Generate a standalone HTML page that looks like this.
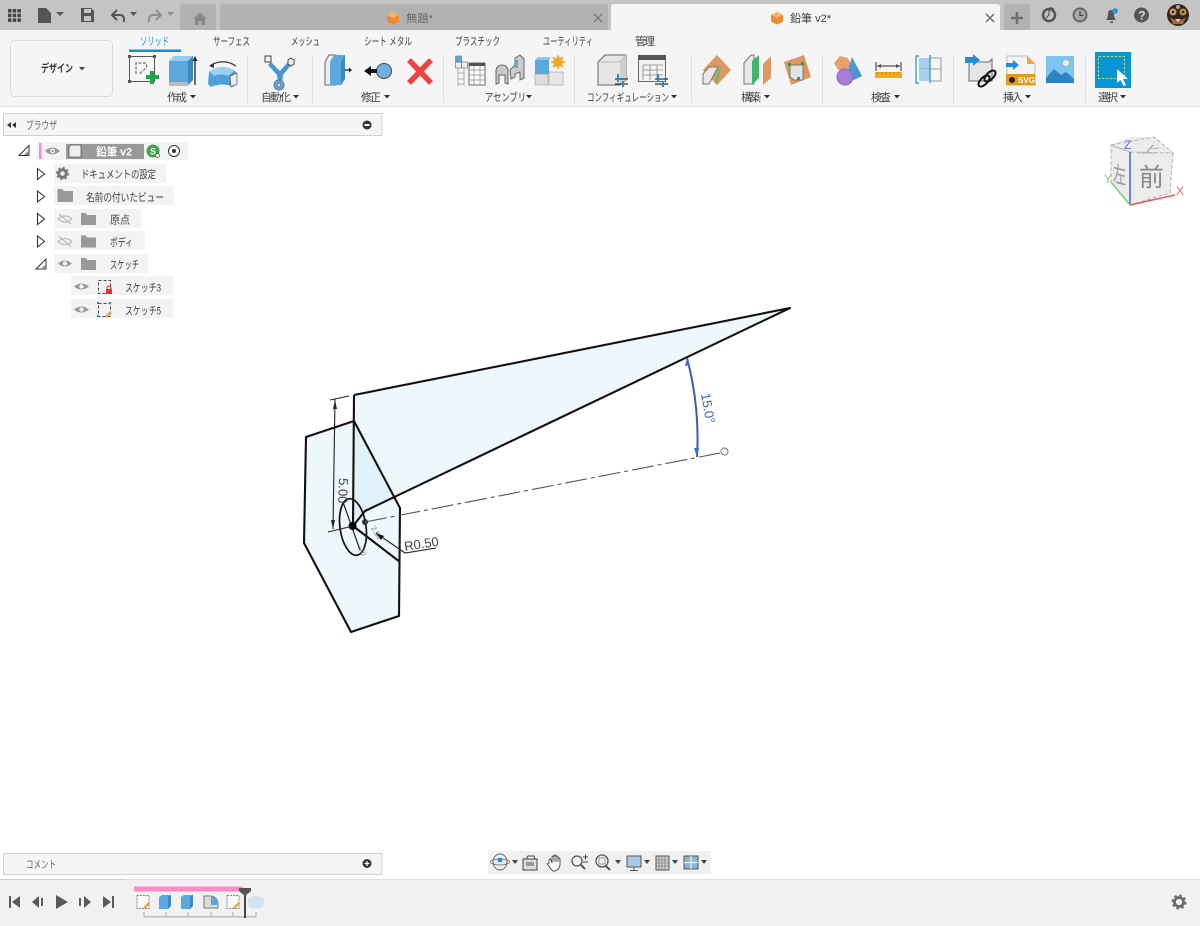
<!DOCTYPE html>
<html><head><meta charset="utf-8"><style>
html,body{margin:0;padding:0;background:#fff;width:1200px;height:926px;overflow:hidden}
svg{display:block}
text{font-family:"Liberation Sans","Noto Sans CJK JP",sans-serif;font-size:11px;fill:#3e3e3e}
</style></head><body>
<svg width="1200" height="926" viewBox="0 0 1200 926" xmlns="http://www.w3.org/2000/svg">
<rect width="1200" height="926" fill="#fff"/>
<!-- top bar -->
<rect width="1200" height="30" fill="#c4c4c4"/>
<path d="M180 30V7q0-3 3-3h30q3 0 3 3v23z" fill="#b2b2b2"/>
<path d="M220 30V7q0-3 3-3h382q3 0 3 3v23z" fill="#b2b2b2"/>
<path d="M611 30V7q0-3 3-3h383q3 0 3 3v23z" fill="#f5f5f5"/>
<path d="M1004 30V7q0-3 3-3h20q3 0 3 3v23z" fill="#b2b2b2"/>
<g fill="#444"><rect x="8" y="9" width="3.5" height="3.5"/><rect x="12.7" y="9" width="3.5" height="3.5"/><rect x="17.4" y="9" width="3.5" height="3.5"/><rect x="8" y="13.7" width="3.5" height="3.5"/><rect x="12.7" y="13.7" width="3.5" height="3.5"/><rect x="17.4" y="13.7" width="3.5" height="3.5"/><rect x="8" y="18.4" width="3.5" height="3.5"/><rect x="12.7" y="18.4" width="3.5" height="3.5"/><rect x="17.4" y="18.4" width="3.5" height="3.5"/></g>
<path d="M38 8h8l5 5v10H38z" fill="#555"/><path d="M56 12h8l-4 4z" fill="#555"/>
<path d="M81 8h10l3 3v11H81z" fill="#555"/><rect x="84" y="9" width="7" height="4" fill="#c4c4c4"/><rect x="84" y="16" width="7" height="5" fill="#c4c4c4"/>
<path d="M117 10l-5 5 5 5" fill="none" stroke="#555" stroke-width="2"/><path d="M113 15h7q4 0 4 5v2" fill="none" stroke="#555" stroke-width="2"/><path d="M130 12h7l-3.500 4z" fill="#555"/>
<path d="M156 10l5 5-5 5" fill="none" stroke="#8f8f8f" stroke-width="2"/><path d="M160 15h-7q-4 0-4 5v2" fill="none" stroke="#8f8f8f" stroke-width="2"/><path d="M167 12h7l-3.500 4z" fill="#8f8f8f"/>
<path d="M193 19l7-6.500 7 6.500h-2v6h-3.500v-4h-3v4H195v-6z" fill="#8a8a8a"/>
<path d="M393 12l6 3v6.500l-6 3-6-3V15z" fill="#f08a2c"/><path d="M393 12l6 3-6 3-6-3z" fill="#f9b26b"/>
<text x="406" y="22" textLength="27" lengthAdjust="spacingAndGlyphs" style="fill:#666">無題*</text>
<path d="M594 14l8 8M602 14l-8 8" stroke="#777" stroke-width="1.300"/>
<path d="M777 12l6 3v6.500l-6 3-6-3V15z" fill="#f08a2c"/><path d="M777 12l6 3-6 3-6-3z" fill="#f9b26b"/>
<text x="790" y="22" textLength="41" lengthAdjust="spacingAndGlyphs">鉛筆 v2*</text>
<path d="M986 14l8 8M994 14l-8 8" stroke="#666" stroke-width="1.300"/>
<path d="M1017 12v12M1011 18h12" stroke="#6f6f6f" stroke-width="2.600"/>
<circle cx="1049" cy="15" r="6" fill="none" stroke="#555" stroke-width="2.500"/><path d="M1049 7l5 1-1 5z" fill="#555"/><path d="M1049 10v5l-3 3" stroke="#555" stroke-width="1.200" fill="none"/>
<circle cx="1080" cy="15" r="7.500" fill="#666"/><circle cx="1080" cy="15" r="5.500" fill="#aaa"/><path d="M1080 11v4.500h3.500" stroke="#444" stroke-width="1.300" fill="none"/>
<path d="M1106 20q2-2 2-6 0-4 3-4t3 4q0 4 2 6zM1110 21.500h3v1.500h-3z" fill="#555"/><circle cx="1115" cy="11" r="2.800" fill="#2196e0"/>
<circle cx="1141.500" cy="15" r="7.500" fill="#555"/><text x="1138.200" y="19.500" style="font-size:12px;font-weight:bold;fill:#ddd">?</text>
<circle cx="1178" cy="15" r="11" fill="#33261b"/><circle cx="1173" cy="12" r="3.500" fill="#c99a60"/><circle cx="1183" cy="12" r="3.500" fill="#b98a50"/><circle cx="1173" cy="12" r="1.200" fill="#222"/><circle cx="1183" cy="12" r="1.200" fill="#222"/><path d="M1170 17q8 7 16 0l-3 7h-10z" fill="#a9683a"/><path d="M1175 19h6l-3 3z" fill="#e6d2b0"/><circle cx="1178" cy="7" r="2" fill="#caa070"/>
<!-- toolbar -->
<rect y="30" width="1200" height="76" fill="#f5f5f5"/>
<rect y="106" width="1200" height="1" fill="#e2e2e2"/>
<rect x="10.500" y="40.500" width="102" height="56" rx="4" fill="#f5f5f5" stroke="#dcdcdc"/>
<text x="41" y="72" textLength="32" lengthAdjust="spacingAndGlyphs" style="font-weight:bold;fill:#333">デザイン</text><path d="M79 67h6l-3 3.500z" fill="#444"/>
<text x="140" y="45" textLength="29" lengthAdjust="spacingAndGlyphs" style="fill:#1b95d5">ソリッド</text>
<rect x="129" y="49.500" width="52" height="2.500" fill="#1091d4"/>
<text x="213" y="45" textLength="37" lengthAdjust="spacingAndGlyphs">サーフェス</text>
<text x="291" y="45" textLength="29" lengthAdjust="spacingAndGlyphs">メッシュ</text>
<text x="364" y="45" textLength="48" lengthAdjust="spacingAndGlyphs">シート メタル</text>
<text x="455" y="45" textLength="45" lengthAdjust="spacingAndGlyphs">プラスチック</text>
<text x="543" y="45" textLength="50" lengthAdjust="spacingAndGlyphs">ユーティリティ</text>
<text x="635" y="45" textLength="20">管理</text>
<g fill="#dedede"><rect x="247" y="55" width="1" height="48"/><rect x="312" y="55" width="1" height="48"/><rect x="443" y="55" width="1" height="48"/><rect x="574" y="55" width="1" height="48"/><rect x="691" y="55" width="1" height="48"/><rect x="822" y="55" width="1" height="48"/><rect x="953" y="55" width="1" height="48"/><rect x="1085" y="55" width="1" height="48"/></g>
<text x="167" y="101" textLength="20">作成</text><path d="M190 95h6l-3 3.500z" fill="#333"/>
<text x="261" y="101" textLength="30">自動化</text><path d="M293 95h6l-3 3.500z" fill="#333"/>
<text x="361" y="101" textLength="20">修正</text><path d="M384 95h6l-3 3.500z" fill="#333"/>
<text x="485" y="101" textLength="41" lengthAdjust="spacingAndGlyphs">アセンブリ</text><path d="M526 95h6l-3 3.500z" fill="#333"/>
<text x="587" y="101" textLength="82" lengthAdjust="spacingAndGlyphs">コンフィギュレーション</text><path d="M671 95h6l-3 3.500z" fill="#333"/>
<text x="741" y="101" textLength="20">構築</text><path d="M764 95h6l-3 3.500z" fill="#333"/>
<text x="871" y="101" textLength="20">検査</text><path d="M894 95h6l-3 3.500z" fill="#333"/>
<text x="1003" y="101" textLength="20">挿入</text><path d="M1025 95h6l-3 3.500z" fill="#333"/>
<text x="1098" y="101" textLength="20">選択</text><path d="M1120 95h6l-3 3.500z" fill="#333"/>
<!-- sketch icon -->
<rect x="129.500" y="56.500" width="25" height="25" fill="none" stroke="#555"/><g fill="#555"><rect x="128" y="55" width="3" height="3"/><rect x="153" y="55" width="3" height="3"/><rect x="128" y="80" width="3" height="3"/></g><path d="M136 74V63h10q2 3-1 6-4 3-5 5" fill="none" stroke="#555" stroke-dasharray="3 1.500"/><path d="M149 74h4v-4h4v4h5v4h-5v5h-4v-5h-4z" transform="translate(-3 1)" fill="#1aa74a"/>
<!-- extrude -->
<path d="M169 61l5-5h19v24l-5 5h-19z" fill="#5aa8de"/><path d="M169 61l5-5h19l-5 5z" fill="#97cdf0"/><path d="M188 61l5-5v24l-5 5z" fill="#3f87bf"/><path d="M169 82h19v4h-19z" fill="#bcbcbc"/>
<path d="M195 85V59" stroke="#222" stroke-width="1.300"/><path d="M192.500 61l2.500-5 2.500 5z" fill="#222"/>
<!-- revolve -->
<path d="M209 72q14-9 26-1l2 2v11l-4 3q-10-5-22 0l-3-3z" fill="#4d9fd9"/><path d="M209 71q14-8 25 0l-6 5q-7-3-14 0z" fill="#9ad0f2"/><path d="M230 76l7-3v11l-6 3z" fill="#eee" stroke="#555" stroke-width=".7"/><path d="M211 65q13-7 25 1" fill="none" stroke="#333" stroke-width="1.200"/><path d="M209 66l5-3 0 5z" fill="#333"/>
<!-- automate -->
<path d="M271 62l9 9 8-9 3 3-8 10-1 9h-4l-1-9-9-10z" fill="#4a97cf"/><circle cx="279" cy="85" r="5" fill="#6aa7d4" stroke="#4a7fa8"/><circle cx="279" cy="85" r="2" fill="#ddd" stroke="#555" stroke-width=".7"/><rect x="265" y="56" width="6" height="6" fill="#eee" stroke="#444"/><path d="M291 58l3 2v4l-3 2-3-2v-4z" fill="#eee" stroke="#444"/>
<!-- press pull -->
<path d="M325 62l4-7h7v30h-11z" fill="#ededed" stroke="#666"/><path d="M330 62l4-7h11v24l-4 6h-11z" fill="#5aa8de"/><path d="M341 62l4-7v24l-4 6z" fill="#3f87bf"/><path d="M345 70h5" stroke="#222" stroke-width="1.300"/><path d="M349 67.500l3 2.500-3 2.500z" fill="#222"/>
<!-- fillet arrow -->
<circle cx="384" cy="71" r="7.500" fill="#75aee0" stroke="#444"/><path d="M364 71l7-5v3h6v4h-6v3z" fill="#111"/>
<path d="M409 60l22 23M431 60l-22 23" stroke="#f04141" stroke-width="5.500"/>
<!-- assembly -->
<rect x="455.500" y="56" width="6" height="6" fill="#5ba8de" stroke="#777" stroke-width=".6"/><rect x="461.500" y="62" width="6" height="6" fill="#eee" stroke="#666" stroke-width=".6"/><rect x="455.500" y="62" width="6" height="6" fill="#eee" stroke="#666" stroke-width=".6"/><path d="M458 68v18M464 68v18M458 73h6M458 79h6M458 84h6" stroke="#aaa"/><rect x="469" y="63" width="16" height="22" fill="#fff" stroke="#666"/><rect x="469" y="63" width="16" height="3" fill="#555"/><path d="M469 70h16M469 75h16M469 80h16M474 66v19M480 66v19" stroke="#888" stroke-width=".7"/>
<path d="M496 84V70q1-5 6-5t6 5v14l-3-1v-8h-6v8z" fill="#c8c8c8" stroke="#666"/><path d="M510 70l5-5v-7l5-3 4 4v19l-4 2v-8l-5 2v3l-4 2z" fill="#cdcdcd" stroke="#666"/><rect x="515" y="60" width="3" height="8" fill="#5ba8de"/>
<rect x="535" y="60" width="14" height="14" fill="#5aa8de"/><path d="M535 60l3-3h13l-2 3z" fill="#93c9ec"/><rect x="535" y="74" width="13" height="11" fill="#ddd" stroke="#999" stroke-width=".6"/><rect x="549" y="72" width="14" height="13" fill="#e7e7e7" stroke="#999" stroke-width=".6"/><path d="M558 54l1.500 4 4-1.500-1.500 4 4 1.500-4 1.500 1.500 4-4-1.500-1.500 4-1.500-4-4 1.500 1.500-4-4-1.500 4-1.500-1.500-4 4 1.500z" fill="#f5a623"/>
<!-- config -->
<path d="M598 62l7-7h21v25l-6 5h-22z" fill="#e6e6e6" stroke="#666"/><path d="M620 62l6-7v25l-6 5z" fill="#cfcfcf"/><path d="M598 62h22l6-7" fill="none" stroke="#bbb"/>
<path d="M615 79h13M615 84h13" stroke="#333" stroke-width="1.200"/><path d="M618 74v8M623 81v6" stroke="#1f8fd8" stroke-width="2"/>
<rect x="638.500" y="55.500" width="27" height="26" fill="#f3f3f3" stroke="#666"/><rect x="638" y="55" width="28" height="5" fill="#555"/><path d="M643 65h20M643 70h20M643 75h20M643 65v15M650 65v15M657 65v15" stroke="#888" stroke-width=".8"/>
<path d="M655 79h13M655 84h13" stroke="#333" stroke-width="1.200"/><path d="M658 74v8M663 81v6" stroke="#1f8fd8" stroke-width="2"/>
<!-- construct -->
<path d="M717 55l14 15-14 15-14-15z" fill="#e0965f"/><path d="M703 74l6-7h9l-9 17h-6z" fill="#e8e8e8" stroke="#777"/><path d="M718 70l4-5-4 16-3 3z" fill="#5cc07c"/>
<path d="M744 63l7-8h3v29h-10z" fill="#e8e8e8" stroke="#777"/><path d="M752 61l7-6v23l-7 7z" fill="#3fb56c"/>
<path d="M763 64l8-8v22l-8 7z" fill="#e0965f"/>
<path d="M784 62l20-7 7 22-20 8z" fill="#e0965f"/><path d="M790 65h13v15h-9l-4-3z" fill="#e3e3e3" stroke="#777"/><g fill="#19a84d"><rect x="788" y="63" width="3" height="3"/><rect x="801" y="62" width="3" height="3"/><rect x="797" y="77" width="3" height="3"/></g>
<!-- inspect -->
<path d="M840 56l8 2 3 6-5 7-8-1-4-7z" fill="#e8a06e"/><path d="M852 57l10 19-8 4-8-4z" fill="#4a97d3"/><circle cx="845" cy="77" r="8" fill="#a67fd8" stroke="#8b62c2"/>
<path d="M876 62v9M901 62v9M877 66h23" stroke="#555" stroke-width="1.200"/><path d="M877 66l4-2v4zM900 66l-4-2v4z" fill="#555"/><rect x="875" y="72" width="27" height="6" fill="#f5a81c"/><path d="M878 72v2M882 72v2M886 72v2M890 72v2M894 72v2M898 72v2" stroke="#a8730f" stroke-width=".7"/>
<rect x="919" y="58" width="11" height="11" fill="#a7d0ee"/><rect x="919" y="70" width="11" height="11" fill="#a7d0ee"/><rect x="930" y="58" width="11" height="23" fill="none" stroke="#9a9a9a"/><path d="M930 69h11M919 69h11" stroke="#9a9a9a"/><path d="M919 56h-3v27h3M930 55v28" stroke="#1e92dc" stroke-width="1.200" fill="none"/>
<!-- insert -->
<path d="M969 62h20l3-3v22h-23z" fill="#e6e6e6" stroke="#666"/><path d="M965 57h8v-3l7 6-7 6v-3h-8z" fill="#1e8fd8"/><ellipse cx="984" cy="81" rx="7" ry="3.500" transform="rotate(-45 984 81)" fill="none" stroke="#111" stroke-width="2"/><ellipse cx="990" cy="76" rx="7" ry="3.500" transform="rotate(-45 990 76)" fill="none" stroke="#111" stroke-width="2"/>
<path d="M1007 56h20l8 8v21h-28z" fill="#f4f4f4" stroke="#bbb"/><path d="M1027 56l8 8h-8z" fill="#f5a81c"/><rect x="1006" y="74" width="29" height="11" fill="#e49a1a"/><text x="1018" y="83" style="font-size:8px;font-weight:bold;fill:#fff">SVG</text><circle cx="1012" cy="80" r="3" fill="#222"/><path d="M1006 63h7v-3l6 5-6 5v-3h-7z" fill="#1e8fd8"/>
<rect x="1046" y="56" width="28" height="27" fill="#7fc3f0"/><circle cx="1066" cy="63" r="3" fill="#f5eeb8"/><path d="M1046 78l8-9 7 6 5-3 8 7v4h-28z" fill="#2e83c4"/>
<!-- select -->
<rect x="1095" y="52" width="36" height="36" fill="#0696d7"/><rect x="1098.500" y="56.500" width="26" height="22" fill="none" stroke="#a6e08c" stroke-dasharray="2.500 1.500"/><path d="M1117 69v14l3.500-3 3 6 2.500-1-3-6h5z" fill="#fff"/>
<!-- browser -->
<rect x="3.500" y="113.500" width="378.500" height="22" fill="#f5f5f5" stroke="#d0d0d0"/>
<path d="M11 122l-4 3 4 3zM16 122l-4 3 4 3z" fill="#333"/>
<text x="26" y="129" textLength="31" lengthAdjust="spacingAndGlyphs" style="fill:#666">ブラウザ</text>
<circle cx="367" cy="125" r="4.500" fill="#333"/><rect x="364.500" y="124" width="5" height="2" fill="#fff"/>
<g fill="#f3f3f3"><rect x="37" y="142" width="151" height="18"/><rect x="54" y="164" width="112" height="19"/><rect x="54" y="186" width="120" height="19"/><rect x="54" y="209" width="87" height="19"/><rect x="54" y="231" width="91" height="19"/><rect x="54" y="254" width="94" height="19"/><rect x="71" y="276" width="102" height="19"/><rect x="71" y="299" width="102" height="19"/></g>
<path d="M19 155.500l10-10v10z" fill="#fff" stroke="#333"/><path d="M24 155l5-5v5z" fill="#888"/>
<rect x="39" y="143" width="2.500" height="16" fill="#ff8ac8"/>
<path d="M45 151q7-7 15 0-8 7-15 0z" fill="#999"/><circle cx="52.500" cy="151" r="2.400" fill="#f3f3f3"/><circle cx="52.500" cy="151" r="1.100" fill="#999"/>
<rect x="66" y="144" width="78" height="15" fill="#999"/><path d="M69 147l2-2h10v12H69z" fill="#efefef" stroke="#555" stroke-width=".8"/>
<text x="96" y="155.500" textLength="36" lengthAdjust="spacingAndGlyphs" style="font-weight:bold;fill:#fff">鉛筆 v2</text>
<circle cx="153" cy="151" r="6.500" fill="#45a04d"/><text x="150" y="154.500" style="font-size:9px;font-weight:bold;fill:#fff">S</text><circle cx="157.500" cy="155.500" r="2" fill="#fff" stroke="#333" stroke-width=".7"/>
<circle cx="174" cy="151" r="5.500" fill="#fff" stroke="#333"/><circle cx="174" cy="151" r="2" fill="#333"/>
<g fill="#fff" stroke="#333" stroke-width="1.100"><path d="M37.500 168.500l7 5.500-7 5.500z"/><path d="M37.500 191l7 5.500-7 5.500z"/><path d="M37.500 213.500l7 5.500-7 5.500z"/><path d="M37.500 236l7 5.500-7 5.500z"/></g>
<path d="M36 269l10-10v10z" fill="#fff" stroke="#333"/><path d="M41 269l5-5v5z" fill="#888"/>
<circle cx="62.500" cy="173.500" r="3.800" fill="none" stroke="#777" stroke-width="3"/><circle cx="62.500" cy="173.500" r="5.800" fill="none" stroke="#777" stroke-width="1.600" stroke-dasharray="2 2.550"/>
<text x="81" y="178" textLength="75" lengthAdjust="spacingAndGlyphs">ドキュメントの設定</text>
<path d="M57.500 189h5l1 2h9.500v11H57.500z" fill="#999"/>
<text x="86" y="201" textLength="78" lengthAdjust="spacingAndGlyphs">名前の付いたビュー</text>
<g fill="none" stroke="#b0b0b0"><path d="M58 219q7-6 14 0-7 6-14 0z"/><path d="M59 214l12 10"/><path d="M58 241.500q7-6 14 0-7 6-14 0z"/><path d="M59 236.500l12 10"/></g>
<path d="M81 213h5l1 2h9v10H81zM81 235.500h5l1 2h9v10H81zM81 258h5l1 2h9v10H81z" fill="#999"/>
<text x="110" y="223.500" textLength="20" lengthAdjust="spacingAndGlyphs">原点</text>
<text x="110" y="246" textLength="23" lengthAdjust="spacingAndGlyphs">ボディ</text>
<text x="110" y="268.500" textLength="29" lengthAdjust="spacingAndGlyphs">スケッチ</text>
<path d="M58 263.500q7-6 14 0-7 6-14 0zM74 286.500q7-6 15 0-8 6-15 0zM74 309.500q7-6 15 0-8 6-15 0z" fill="#999"/><circle cx="65" cy="263.500" r="2.200" fill="#f3f3f3"/><circle cx="81.500" cy="286.500" r="2.200" fill="#f3f3f3"/><circle cx="81.500" cy="309.500" r="2.200" fill="#f3f3f3"/>
<rect x="98.500" y="280.500" width="12" height="13" fill="none" stroke="#444" stroke-dasharray="3 2"/><rect x="106" y="289" width="6" height="5" fill="#e0332e"/><path d="M107 289v-2q2-2 4 0v2" stroke="#e0332e" fill="none"/>
<rect x="98.500" y="303.500" width="12" height="13" fill="none" stroke="#444" stroke-dasharray="3 2"/><g fill="#1e92dc"><rect x="97" y="302" width="2" height="2"/><rect x="109" y="302" width="2" height="2"/><rect x="97" y="315" width="2" height="2"/></g><path d="M106 317l5-5" stroke="#f0a03a" stroke-width="2.400"/>
<text x="125" y="291.500" textLength="36" lengthAdjust="spacingAndGlyphs">スケッチ3</text>
<text x="125" y="314.500" textLength="36" lengthAdjust="spacingAndGlyphs">スケッチ5</text>
<!-- viewcube -->
<path d="M1111 145l20-8 23 0 19 16-3 40-40 12-19-23z" fill="#ececec"/>
<path d="M1111 145l43-8 19 16-43-1zM1111 145l19 7v53l-19-23zM1173 153l-3 40-40 12" fill="none" stroke="#b4b4b4" stroke-dasharray="4 2"/>
<text x="1139" y="186" style="font-size:25px;fill:#888">前</text>
<text transform="translate(1113 181) skewY(15) scale(.6 1)" style="font-size:22px;fill:#999">左</text>
<text transform="translate(1136 153) skewX(-40) scale(1 .45)" style="font-size:22px;fill:#aaa">上</text>
<path d="M1130 205v-53" stroke="#4a67ea" stroke-width="1.600"/><path d="M1130 205l45-10" stroke="#ea5a5a" stroke-width="1.600"/><path d="M1130 205l-19-23" stroke="#7ad07a" stroke-width="1.600"/>
<text x="1124" y="149" style="font-size:12px;fill:#5a72ea">Z</text><text x="1176" y="195" style="font-size:12px;fill:#ea6a6a">X</text><text x="1104" y="183" style="font-size:12px;fill:#7ad07a">Y</text>
<!-- drawing -->
<path d="M354 395L790 308L365 511L354 525z" fill="#eef7fc"/>
<path d="M306 437L354 421L400 508L399 616L351 632L304 543z" fill="#eef7fc"/>
<path d="M354 421L395 496L365 511L354 522z" fill="#e1f1fa"/>
<g fill="none" stroke="#111" stroke-width="2.100" stroke-linejoin="round">
<path d="M354 395L790 308L365 511L353 526"/><path d="M354 395L353 526"/>
<path d="M306 437L354 421L400 508L399 616L351 632L304 543z"/>
<path d="M353 526L400 562"/>
</g>
<ellipse cx="353" cy="527" rx="13" ry="28.500" transform="rotate(-8 353 527)" fill="none" stroke="#111" stroke-width="1.700"/>
<path d="M343 502L360 550" stroke="#222" stroke-width="1.200"/>
<circle cx="352.500" cy="526" r="4" fill="#000"/><circle cx="365" cy="522" r="3" fill="#333"/>
<path d="M335 399L333 529M330 400L349 396M328 532L353 526" stroke="#222" stroke-width="1.100"/>
<path d="M335 400l-2 9h4zM333 529l-2-9h4z" fill="#222"/>
<text transform="translate(339 478) rotate(92)" style="font-size:13px;fill:#444">5.00</text>
<text transform="translate(360 546) rotate(85)" style="font-size:7px;fill:#777">.50</text><text transform="translate(371 528) rotate(60)" style="font-size:7px;fill:#777">2.50</text>
<path d="M376 533L405 553L436 548" fill="none" stroke="#222" stroke-width="1.100"/><path d="M376 533l8 3-3 4z" fill="#111"/>
<text transform="translate(405 551) rotate(-9)" style="font-size:13px;fill:#444">R0.50</text>
<path d="M365 522L720 453" stroke="#555" stroke-width="1.100" stroke-dasharray="22 4 4 4"/>
<circle cx="724.500" cy="451.500" r="3.500" fill="#fff" stroke="#888" stroke-width="1.200"/>
<path d="M687 358Q700 407 697 457" fill="none" stroke="#3b5cae" stroke-width="2"/>
<path d="M687 358l-2 8 5-1zM697 457l-3-9 5 0z" fill="#3b6fd0"/>
<text transform="translate(701 394) rotate(80)" style="font-size:13px;fill:#3f5cb5">15.0°</text>
<!-- comment -->
<rect x="3.500" y="853.500" width="378.500" height="21" fill="#f5f5f5" stroke="#d0d0d0"/>
<text x="26" y="868" textLength="30" lengthAdjust="spacingAndGlyphs" style="fill:#666">コメント</text>
<circle cx="367" cy="863.500" r="4.500" fill="#333"/><path d="M364.500 863.500h5M367 861v5" stroke="#fff" stroke-width="1.200"/>
<!-- nav bar -->
<rect x="488" y="851" width="223" height="23" fill="#f0f0f0"/>
<ellipse cx="500" cy="862" rx="7" ry="8" fill="none" stroke="#666"/><ellipse cx="500" cy="862" rx="9.500" ry="3" fill="none" stroke="#666" stroke-width=".8"/><circle cx="500" cy="860" r="2.400" fill="#1e92dc"/>
<path d="M512 860h6l-3 4z" fill="#444"/>
<rect x="523" y="859" width="14" height="11" fill="#ddd" stroke="#444"/><rect x="526" y="862" width="8" height="4" fill="#999"/><path d="M526 859l2-3h6l1 3" fill="none" stroke="#444"/>
<path d="M549 864v-4q1-2 2 0l1 3v-6q1-2 2 0v5-6q1-2 2 0v6-5q1-2 2 0v5-3q1-2 2 0v6q-1 5-5 6h-2q-3-2-6-8" fill="#fff" stroke="#444" stroke-width=".9"/>
<circle cx="577" cy="861" r="5" fill="none" stroke="#555" stroke-width="1.300"/><path d="M581 865l4 4" stroke="#444" stroke-width="1.800"/><path d="M583 857h5M585.500 854.500v5M583 862h5" stroke="#444"/>
<circle cx="602" cy="861" r="6" fill="none" stroke="#555" stroke-width="1.300"/><rect x="599" y="858" width="6" height="6" fill="none" stroke="#999"/><path d="M606 866l4 4" stroke="#444" stroke-width="1.800"/><path d="M615 860h6l-3 4z" fill="#444"/>
<rect x="627" y="856" width="14" height="11" fill="#a9c9e4" stroke="#555"/><path d="M634 867v3M630 870.500h8" stroke="#555"/><path d="M644 860h6l-3 4z" fill="#444"/>
<rect x="656" y="856" width="13" height="14" fill="#d0d0d0" stroke="#555"/><path d="M659 856v14M662 856v14M665 856v14M656 860h13M656 863h13M656 866h13" stroke="#666" stroke-width=".6"/><path d="M672 860h6l-3 4z" fill="#444"/>
<rect x="684" y="856" width="14" height="13" fill="#8ab4d8" stroke="#555"/><path d="M691 856v13M684 862.500h14" stroke="#f0f0f0" stroke-width="1.200"/><path d="M701 860h6l-3 4z" fill="#444"/>
<!-- timeline -->
<rect y="879" width="1200" height="47" fill="#f1f1f1"/>
<rect y="879" width="1200" height="1" fill="#e0e0e0"/><rect y="879" width="125" height="1" fill="#cfcfcf"/>
<g fill="#5a5a5a"><rect x="9" y="896" width="2" height="12"/><path d="M20 896v12l-8-6z"/><path d="M32 902l7-6v12zM41 898h2v8h-2z"/><path d="M56 895l12 7-12 7z"/><path d="M91 902l-7-6v12zM79 898h2v8h-2z"/><path d="M103 896v12l8-6zM112 896h2v12h-2z"/></g>
<rect x="134" y="886.500" width="109" height="5" fill="#ff8ac8"/>
<rect x="143.500" y="916" width="113" height="1.500" fill="#bdbdbd"/>
<path d="M144 912v5M166 912v5M188 912v5M211 912v5M233 912v5M256 912v5" stroke="#bdbdbd" stroke-width="1.300"/>
<rect x="137" y="895.500" width="12" height="13" fill="#fafafa" stroke="#888" stroke-dasharray="2 1"/><path d="M144 908l5-5" stroke="#f0a03a" stroke-width="2"/>
<path d="M159 897l3-2h9v11l-3 3h-9z" fill="#5aa8de"/><path d="M168 897l3-2v11l-3 3z" fill="#3f87bf"/>
<path d="M181 897l3-2h9v11l-3 3h-9z" fill="#5aa8de"/><path d="M190 897l3-2v11l-3 3z" fill="#3f87bf"/>
<path d="M204 896h7q7 1 7 9v3h-14z" fill="#dcdcdc" stroke="#777"/><path d="M211 896q7 1 7 9h-7z" fill="#5aa8de"/>
<rect x="227" y="895.500" width="12" height="13" fill="#fafafa" stroke="#888" stroke-dasharray="2 1"/><path d="M234 908l5-5" stroke="#f0a03a" stroke-width="2"/>
<path d="M249 899q7-5 14 0 2 4-1 7-6 4-12 0-3-3-1-7z" fill="#cfe5f5" stroke="#ddd"/>
<path d="M245 889v29" stroke="#444" stroke-width="2"/><path d="M239 888h12v3l-6 5-6-5z" fill="#555"/>
<circle cx="1179" cy="902" r="4.500" fill="none" stroke="#6a6a6a" stroke-width="2.800"/><circle cx="1179" cy="902" r="6.500" fill="none" stroke="#6a6a6a" stroke-width="2" stroke-dasharray="2.500 2.600"/>
</svg>
</body></html>
